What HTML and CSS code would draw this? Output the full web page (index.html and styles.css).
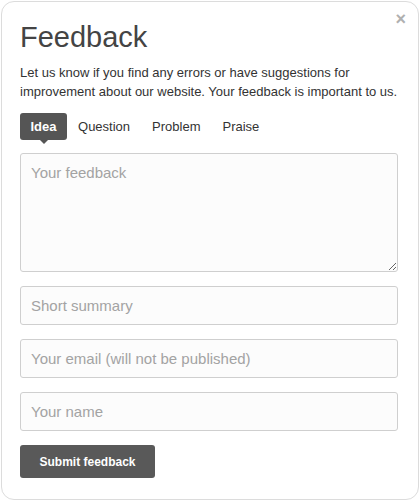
FILE: index.html
```html
<!DOCTYPE html>
<html>
<head>
<meta charset="utf-8">
<link rel="stylesheet" href="styles.css">
</head>
<body>
<div class="panel">
  <button class="close" aria-label="Close">&times;</button>
  <h1 class="title">Feedback</h1>
  <p class="intro">Let us know if you find any errors or have suggestions for improvement about our website. Your feedback is important to us.</p>
  <div class="tabs">
    <span class="tab active">Idea</span>
    <span class="tab">Question</span>
    <span class="tab">Problem</span>
    <span class="tab">Praise</span>
  </div>
  <form class="form">
    <textarea class="field area" placeholder="Your feedback"></textarea>
    <input class="field" type="text" placeholder="Short summary">
    <input class="field" type="text" placeholder="Your email (will not be published)">
    <input class="field" type="text" placeholder="Your name">
    <div><button type="button" class="submit">Submit feedback</button></div>
  </form>
</div>
</body>
</html>
```

FILE: styles.css
```css
* { box-sizing: border-box; }
html, body { margin: 0; padding: 0; background: #fff; }
body { padding: 1px; font-family: "Liberation Sans", Arial, sans-serif; color: #333; }
.panel {
  position: relative;
  width: 418px;
  height: 499px;
  border: 1px solid #dcdcdc;
  border-radius: 13px;
  background: #fff;
  padding: 19px 18px 0 18px;
}
.close {
  position: absolute;
  top: 8px;
  right: 12px;
  border: 0;
  background: none;
  padding: 0;
  font-family: "Liberation Sans", Arial, sans-serif;
  font-size: 18px;
  font-weight: bold;
  color: #b0b0b0;
  line-height: 18px;
}
.title {
  margin: 0;
  font-size: 29px;
  font-weight: normal;
  line-height: 33px;
  color: #444;
}
.intro {
  margin: 10px 0 0 0;
  font-size: 13px;
  line-height: 18.5px;
  color: #333;
}
.tabs {
  display: flex;
  margin-top: 12px;
  height: 27px;
  align-items: center;
}
.tab {
  font-size: 13px;
  color: #333;
  padding: 0 11px;
  line-height: 27px;
  position: relative;
}
.tab.active {
  background: #555;
  color: #fff;
  font-weight: bold;
  border-radius: 3px;
  padding: 0 10.5px;
}
.tab.active::after {
  content: "";
  position: absolute;
  left: 50%;
  margin-left: -4px;
  bottom: -4px;
  border-left: 4px solid transparent;
  border-right: 4px solid transparent;
  border-top: 4px solid #555;
}
.form {
  display: flex;
  flex-direction: column;
  gap: 14px;
  margin-top: 13px;
}
.field {
  display: block;
  width: 378px;
  height: 39px;
  border: 1px solid #cfcfcf;
  border-radius: 3px;
  background: #fcfcfc;
  padding: 0 10px;
  font-family: "Liberation Sans", Arial, sans-serif;
  font-size: 15px;
  color: #333;
  margin: 0;
}
.field::placeholder { color: #a3a3a3; }
.area {
  height: 119px;
  padding: 10px 10px;
  resize: vertical;
}
.submit {
  height: 33px;
  width: 135px;
  padding: 0;
  border: 0;
  border-radius: 3px;
  background: #595959;
  color: #fff;
  font-family: "Liberation Sans", Arial, sans-serif;
  font-size: 12px;
  font-weight: bold;
}
```
